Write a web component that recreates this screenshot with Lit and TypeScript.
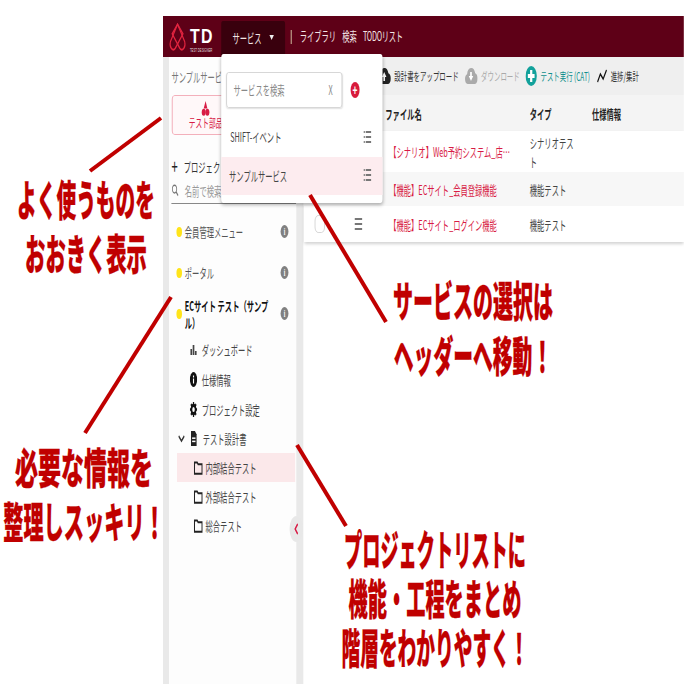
import { LitElement, html, css, svg } from "lit";
import { customElement } from "lit/decorators.js";

const listIcon = html`<svg viewBox="0 0 14 14" width="14" height="14"><g fill="#777"><rect x="0" y="1" width="2.4" height="2"/><rect x="4" y="1" width="10" height="2"/><rect x="0" y="6" width="2.4" height="2"/><rect x="4" y="6" width="10" height="2"/><rect x="0" y="11" width="2.4" height="2"/><rect x="4" y="11" width="10" height="2"/></g></svg>`;
const handleIcon = html`<svg viewBox="0 0 14 12" width="14" height="12"><g fill="#777"><rect y="0" width="14" height="2"/><rect y="5" width="14" height="2"/><rect y="10" width="14" height="2"/></g></svg>`;
const infoDark = html`<svg viewBox="0 0 13 15" width="13" height="15"><ellipse cx="6.5" cy="7.5" rx="6.5" ry="7.5" fill="#111"/><rect x="5.500" y="6.500" width="2" height="5" fill="#fff"/><rect x="5.500" y="3.500" width="2" height="2" fill="#fff"/></svg>`;
const barIcon = html`<svg viewBox="0 0 13 14" width="13" height="14"><g fill="#444"><rect x="1" y="7" width="3" height="6"/><rect x="5" y="3" width="3" height="10"/><rect x="9" y="9" width="3" height="4"/></g></svg>`;
const gearIcon = html`<svg viewBox="0 0 14 14" width="13" height="15" preserveAspectRatio="none"><circle cx="7" cy="7" r="4" fill="none" stroke="#111" stroke-width="3.2"/><g stroke="#111" stroke-width="2.4"><path d="M7 0v3M7 11v3M0 7h3M11 7h3M2 2l2 2M10 10l2 2M12 2l-2 2M4 10l-2 2"/></g></svg>`;
const docIcon = html`<svg viewBox="0 0 12 14" width="12" height="15" preserveAspectRatio="none"><path d="M1 0h7l3 3v11H1z" fill="#222"/><rect x="3" y="6" width="6" height="1.4" fill="#fff"/><rect x="3" y="9" width="6" height="1.4" fill="#fff"/></svg>`;
const folderIcon = html`<svg viewBox="0 0 16 14" width="16" height="14"><path d="M1.2 3.2V1.6h5l1.4 1.6h7.2v9.6H1.2z" fill="none" stroke="#222" stroke-width="2"/></svg>`;
const cloud = (c: string, arrow: string) => html`<svg viewBox="0 0 24 20" width="24" height="20"><path d="M6 18a5 5 0 0 1-1-9.800 7.500 7.500 0 0 1 14.500-1A5.500 5.500 0 0 1 19 18z" fill=${c}/><path d=${arrow} fill="#fff"/></svg>`;

const NOTE_FONT = 42;
const annotations = [
  { cx: 86, top: 171, lh: 54, lines: [["よく使うものを", 19.7], ["おおきく表示", 20.3]] },
  { cx: 84, top: 439, lh: 54, lines: [["必要な情報を", 23], ["整理しスッキリ！", 20.2]] },
  { cx: 473, top: 271, lh: 55, lines: [["サービスの選択は", 20], ["ヘッダーへ移動！", 19.8]] },
  { cx: 435, top: 523, lh: 49, lines: [["プロジェクトリストに", 18.2], ["機能・工程をまとめ", 19.2], ["階層をわかりやすく！", 18.7]] },
] as { cx: number; top: number; lh: number; lines: [string, number][] }[];
const arrows = [
  [90, 171, 161, 118],
  [85, 433, 171, 297],
  [386, 322, 310, 195],
  [346, 526, 297, 445],
];
const files = [
  { name: "【シナリオ】Web予約システム_店舗検索機能", type: "シナリオテスト", cls: "r1" },
  { name: "【機能】ECサイト_会員登録機能", type: "機能テスト", cls: "r2 alt" },
  { name: "【機能】ECサイト_ログイン機能", type: "機能テスト", cls: "r3" },
];
const projects = [
  { name: "会員管理メニュー", cls: "" },
  { name: "ポータル", cls: "" },
  { name: "ECサイト テスト（サンプル）", cls: "strong" },
];

@customElement("app-root")
export class AppRoot extends LitElement {
  static styles = css`
    :host { display: block; position: relative; width: 684px; height: 684px; overflow: hidden; background: #fff;
      font-family: "Noto Sans CJK JP", "Liberation Sans", sans-serif; color: #333; font-size: 13px; }
    .stage { padding: 16px 0 0 163px; height: 668px; }
    .frame { width: 930px; height: 668px; transform: scaleX(.56); transform-origin: 0 0; position: relative; display: flex; flex-direction: column; }
    header { height: 41px; flex: none; background: #5e0017; display: flex; align-items: center; padding-left: 10px; color: #f3e6e6; }
    .logo { display: flex; align-items: center; width: 94px; }
    .td { display: flex; flex-direction: column; align-items: flex-start; margin: 6px 0 0 6px; color: #fff; font-family: "Liberation Sans", sans-serif; }
    .td b { font-size: 21px; line-height: 22px; letter-spacing: 2px; transform: scaleX(1.35); transform-origin: 0 50%; }
    .td small { font-size: 5px; line-height: 7px; color: #ddd; white-space: nowrap; }
    .svc { width: 114px; height: 36px; margin-top: 5px; background: #39000d; border-radius: 3px 3px 0 0; display: flex; align-items: center; justify-content: center; gap: 14px; padding-bottom: 3px; box-sizing: border-box; }
    .svc i { width: 0; height: 0; border: 4px solid transparent; border-top: 5px solid #eee; border-bottom: 0; }
    .sep { width: 2px; height: 14px; background: #c4a58e; margin: 0 14px 0 10px; }
    .links { display: flex; gap: 11px; padding-bottom: 2px; }
    .links .todo { letter-spacing: -.5px; }
    .body { flex: 1; display: flex; min-height: 0; }
    .strip { flex: none; width: 11px; background: #e9e9e9; }
    .strip.r { width: 13px; }
    aside { flex: none; width: 227px; background: #fdfdfd; display: flex; flex-direction: column; }
    .svcname { height: 20px; margin: 10px 0 8px 4px; color: #777; white-space: nowrap; line-height: 20px; }
    .card { margin-left: 5px; width: 120px; height: 40px; box-sizing: border-box; border: 1px solid #ef9aa9; border-radius: 5px; background: #fff8f9; color: #d81b45; font-size: 12px; display: flex; flex-direction: column; align-items: center; justify-content: center; line-height: 14px; }
    .newp { margin: 21px 0 0 4px; height: 20px; display: flex; align-items: center; gap: 11px; white-space: nowrap; }
    .newp span:first-child { font-size: 20px; line-height: 20px; color: #222; }
    .srch { height: 26px; margin: 1px 0 0 4px; border-bottom: 1px solid #888; display: flex; align-items: center; gap: 11px; color: #999; }
    .projects { margin-top: 7px; display: flex; flex-direction: column; }
    .proj { height: 41px; display: flex; align-items: center; padding: 0 14px 0 13px; }
    .proj .dot { flex: none; width: 10px; height: 10px; border-radius: 50%; background: #ffe41a; margin-right: 5px; }
    .proj .nm { flex: 1; line-height: 17px; color: #555; }
    .proj.strong .nm { font-weight: 700; color: #111; }
    .badge { flex: none; margin-left: 18px; width: 14px; height: 13px; border-radius: 50%; background: #808080; color: #fff; font: 700 10px/13px "Liberation Serif", serif; text-align: center; }
    .item { height: 30px; display: flex; align-items: center; gap: 8px; padding-left: 37px; color: #444; white-space: nowrap; }
    .item svg { flex: none; }
    .item.tree { padding-left: 16px; gap: 10px; height: 29px; }
    .item.child { margin-left: 14px; padding-left: 30px; height: 29px; width: 211px; box-sizing: border-box; gap: 5px; }
    .item.child.sel { background: #fbe8ea; }
    main { flex: 1; display: flex; flex-direction: column; min-width: 0; background: #fff; }
    .tools { height: 38px; background: #efefef; display: flex; align-items: center; padding-left: 132px; font-size: 11.500px; white-space: nowrap; }
    .tool { display: flex; align-items: center; gap: 6px; margin-right: 10px; color: #333; }
    .tool.off { color: #aaa; }
    .tool.teal { color: #0f8f8d; margin-right: 13px; }
    .thead, .row { display: grid; grid-template-columns: 146px 258px 111px 1fr; align-items: center; }
    .thead { height: 36px; background: #f4f4f4; font-weight: 700; color: #222; }
    .rows { box-shadow: 0 2px 4px rgba(0,0,0,.18); }
    .row { color: #444; }
    .r1 { height: 41px; } .r2 { height: 34px; } .r3 { height: 36px; }
    .alt { background: #f7f7f7; }
    .lead { display: flex; align-items: center; padding-left: 20px; gap: 53px; }
    .chk { width: 18px; height: 18px; box-sizing: border-box; border: 1px solid #ccc; border-radius: 6px; background: #fff; }
    .fname { color: #d81b45; padding: 0 26px 0 7px; white-space: nowrap; overflow: hidden; text-overflow: ellipsis; }
    .ftype { line-height: 19px; padding: 0 30px 0 0; }
    .toggle { position: absolute; left: 226px; top: 500px; width: 24px; height: 26px; border-radius: 50%; background: #e8e8e8; display: flex; align-items: center; justify-content: center; }
    .menu { position: absolute; left: 104px; top: 38px; width: 288px; height: 149px; background: #fff; border-radius: 4px; box-shadow: 0 2px 5px rgba(0,0,0,.3); }
    .msearch { display: flex; align-items: center; padding: 18px 0 0 9px; }
    .box { width: 207px; height: 36px; box-sizing: border-box; border: 1px solid #ccc; border-radius: 4px; box-shadow: 0 1px 2px rgba(0,0,0,.12); display: flex; align-items: center; justify-content: space-between; padding: 0 16px 2px 12px; color: #888; }
    .plus { width: 16px; height: 16px; margin-left: 15px; border-radius: 50%; background: #d81b3c; color: #fff; font: 700 15px/16px "Liberation Sans", sans-serif; text-align: center; }
    .opt { height: 38px; box-sizing: border-box; padding: 0 20px 2px 16px; display: flex; align-items: center; justify-content: space-between; color: #444; }
    .opt.first { margin-top: 11px; padding-bottom: 3px; }
    .opt.sel { background: #fdecef; padding-left: 14px; }
    .annot { position: absolute; left: 0; top: 0; pointer-events: none; }
    .note { position: absolute; width: 420px; text-align: center; color: #c00000; font-size: 42px; font-weight: 900; -webkit-text-stroke: .3px #c00000; white-space: nowrap; }
  `;

  render() {
    return html`
      <div class="stage">
        <div class="frame">
          <header>
            <div class="logo">
              <svg viewBox="0 0 40 36" width="32" height="32"><g fill="none" stroke="#e0243f" stroke-width="2.4"><path d="M20 2 L4 24 a7 7 0 0 0 11 8 L32 14 L20 2z"/><path d="M20 2 L36 24 a7 7 0 0 1-11 8 L8 14 L20 2z"/></g></svg>
              <div class="td"><b>TD</b><small>TEST DESIGNER</small></div>
            </div>
            <div class="svc"><span>サービス</span><i></i></div>
            <div class="sep"></div>
            <div class="links"><span>ライブラリ</span><span>検索</span><span class="todo">TODOリスト</span></div>
          </header>
          <div class="body">
            <div class="strip"></div>
            <aside>
              <div class="svcname">サンプルサービス</div>
              <div class="card">
                <svg viewBox="0 0 16 16" width="16" height="15"><path d="M8 0l3.500 8h-7z" fill="#d81b45"/><circle cx="4.500" cy="12" r="3.800" fill="#d81b45"/><circle cx="11.500" cy="12" r="3.800" fill="#d81b45"/></svg>
                <span>テスト部品</span>
              </div>
              <div class="newp"><span>+</span><span>プロジェクト</span></div>
              <div class="srch">
                <svg viewBox="0 0 14 14" width="13" height="14"><circle cx="6" cy="6" r="4.200" fill="none" stroke="#777" stroke-width="1.600"/><path d="M9 9l4 4" stroke="#777" stroke-width="1.800"/></svg>
                <span>名前で検索</span>
              </div>
              <div class="projects">
                ${projects.map(p => html`<div class="proj ${p.cls}"><span class="dot"></span><span class="nm">${p.name}</span><span class="badge">i</span></div>`)}
              </div>
              <div>
                <div class="item">${barIcon}<span>ダッシュボード</span></div>
                <div class="item">${infoDark}<span>仕様情報</span></div>
                <div class="item">${gearIcon}<span>プロジェクト設定</span></div>
                <div class="item tree">
                  <svg viewBox="0 0 12 8" width="12" height="8"><path d="M1 1l5 5 5-5" fill="none" stroke="#333" stroke-width="2"/></svg>
                  ${docIcon}<span>テスト設計書</span>
                </div>
                <div class="item child sel">${folderIcon}<span>内部結合テスト</span></div>
                <div class="item child">${folderIcon}<span>外部結合テスト</span></div>
                <div class="item child">${folderIcon}<span>総合テスト</span></div>
              </div>
            </aside>
            <div class="strip r"></div>
            <main>
              <div class="tools">
                <div class="tool">${cloud("#222", "M12 6l4 5h-2.500v4h-3v-4H8z")}<span>設計書をアップロード</span></div>
                <div class="tool off">${cloud("#aaa", "M12 15l-4-5h2.500V6h3v4H16z")}<span>ダウンロード</span></div>
                <div class="tool teal"><svg viewBox="0 0 20 20" width="21" height="20"><circle cx="10" cy="10" r="10" fill="#12a19b"/><path d="M8 4h4v4h4v4h-4v4H8v-4H4V8h4z" fill="#fff"/></svg><span>テスト実行 (CAT)</span></div>
                <div class="tool"><svg viewBox="0 0 18 14" width="18" height="14"><path d="M1 13l5-8 5 5 6-9" fill="none" stroke="#111" stroke-width="2"/></svg><span>進捗/集計</span></div>
              </div>
              <div class="thead"><span></span><span>ファイル名</span><span>タイプ</span><span>仕様情報</span></div>
              <div class="rows">
                ${files.map(f => html`<div class="row ${f.cls}">
                  <div class="lead"><span class="chk"></span>${handleIcon}</div>
                  <div class="fname">${f.name}</div>
                  <div class="ftype">${f.type}</div>
                  <div></div>
                </div>`)}
              </div>
            </main>
          </div>
          <div class="toggle"><svg viewBox="0 0 8 12" width="8" height="12"><path d="M6.500 1L2 6l4.500 5" fill="none" stroke="#d81b45" stroke-width="2.200"/></svg></div>
          <div class="menu">
            <div class="msearch">
              <div class="box"><span>サービスを検索</span><span>X</span></div>
              <div class="plus">+</div>
            </div>
            <div class="opt first"><span>SHIFT-イベント</span>${listIcon}</div>
            <div class="opt sel"><span>サンプルサービス</span>${listIcon}</div>
          </div>
        </div>
      </div>
      <svg class="annot" width="684" height="684" viewBox="0 0 684 684">
        ${arrows.map(a => svg`<line x1=${a[0]} y1=${a[1]} x2=${a[2]} y2=${a[3]} stroke="#c00000" stroke-width="4"/>`)}
      </svg>
      ${annotations.map(n => html`<div class="note" style="left:${n.cx - 210}px;top:${n.top}px;line-height:${n.lh}px">${n.lines.map(l => html`<div style="transform:scaleX(${l[1] / NOTE_FONT})">${l[0]}</div>`)}</div>`)}
    `;
  }
}
